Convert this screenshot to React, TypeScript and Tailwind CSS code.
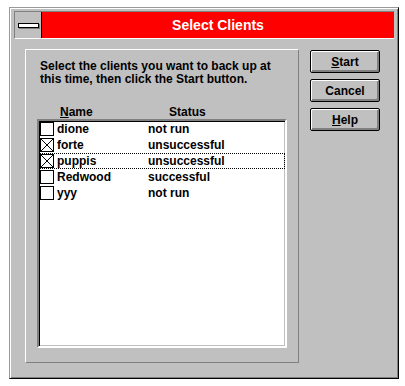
import React from 'react'

const clients = [
  { name: 'dione', status: 'not run', checked: false },
  { name: 'forte', status: 'unsuccessful', checked: true },
  { name: 'puppis', status: 'unsuccessful', checked: true, focused: true },
  { name: 'Redwood', status: 'successful', checked: false },
  { name: 'yyy', status: 'not run', checked: false },
]

function CheckBox({ checked }: { checked: boolean }) {
  return (
    <span className="mt-[1px] ml-[1px] block h-[14px] w-[14px] shrink-0 border border-black bg-white">
      {checked && (
        <svg width="12" height="12" viewBox="0 0 12 12" className="block">
          <path d="M0 0L12 12M12 0L0 12" stroke="#000" strokeWidth="1" shapeRendering="crispEdges" />
        </svg>
      )}
    </span>
  )
}

function DlgButton({ children }: { children: React.ReactNode }) {
  return (
    <button className="flex h-[23px] w-[70px] items-center justify-center rounded-[2px] border border-black bg-[#c0c0c0] text-[12px] font-bold leading-none text-black shadow-[inset_1px_1px_0_#fff,inset_-1px_-1px_0_#808080,inset_-2px_-2px_0_#808080]">
      {children}
    </button>
  )
}

export default function App() {
  return (
    <div className="h-[386px] w-[405px] overflow-hidden bg-white pl-[9px] pt-[7px] font-['Liberation_Sans',Arial,sans-serif]">
      <div className="h-[372px] w-[390px] border border-t-[#9a9a9a] border-l-[#9a9a9a] border-r-black border-b-black bg-[#c0c0c0] px-[4px] pt-[3px] shadow-[inset_1px_1px_0_#fff,inset_-1px_-1px_0_#808080]">
        {/* title bar */}
        <div className="flex h-[28px] border-t border-l border-[#808080] border-b border-b-white">
          <div className="flex w-[27px] items-center justify-center border-r border-black bg-[#c0c0c0]">
            <span className="block h-[5px] w-[21px] border border-black bg-white shadow-[1px_1px_0_#808080]" />
          </div>
          <div className="flex flex-1 items-center justify-center bg-[#ff0000] text-[14px] font-bold text-white">
            Select Clients
          </div>
        </div>

        <div className="ml-[11px] mt-[10px] flex">
          {/* group box */}
          <div className="h-[314px] w-[274px] border border-t-white border-l-white border-r-[#808080] border-b-[#808080]">
            <p className="pl-[14px] pt-[10px] text-[12px] font-bold leading-[13px] text-black">
              Select the clients you want to back up at
              <br />
              this time, then click the Start button.
            </p>
            <div className="ml-[34px] mt-[20px] flex text-[12px] font-bold leading-[13px] text-black">
              <span className="w-[109px]">
                <span className="underline">N</span>ame
              </span>
              <span>Status</span>
            </div>
            <div className="ml-[11px] h-[229px] w-[250px] border-2 border-t-[#808080] border-l-[#808080] border-r-white border-b-white bg-white shadow-[inset_1px_1px_0_#000,inset_-1px_-1px_0_#c0c0c0]">
              {clients.map((c) => (
                <div
                  key={c.name}
                  className={
                    c.focused
                      ? 'relative flex h-[16px] text-[12px] font-bold leading-[16px] text-black outline-1 -outline-offset-1 outline-dotted outline-black'
                      : 'relative flex h-[16px] text-[12px] font-bold leading-[16px] text-black'
                  }
                >
                  <CheckBox checked={c.checked} />
                  <span className="ml-[3px] w-[91px]">{c.name}</span>
                  <span>{c.status}</span>
                </div>
              ))}
            </div>
          </div>

          {/* buttons */}
          <div className="ml-[11px] mt-[1px] flex flex-col gap-[6px]">
            <DlgButton>
              <span className="underline">S</span>tart
            </DlgButton>
            <DlgButton>Cancel</DlgButton>
            <DlgButton>
              <span className="underline">H</span>elp
            </DlgButton>
          </div>
        </div>
      </div>
    </div>
  )
}
